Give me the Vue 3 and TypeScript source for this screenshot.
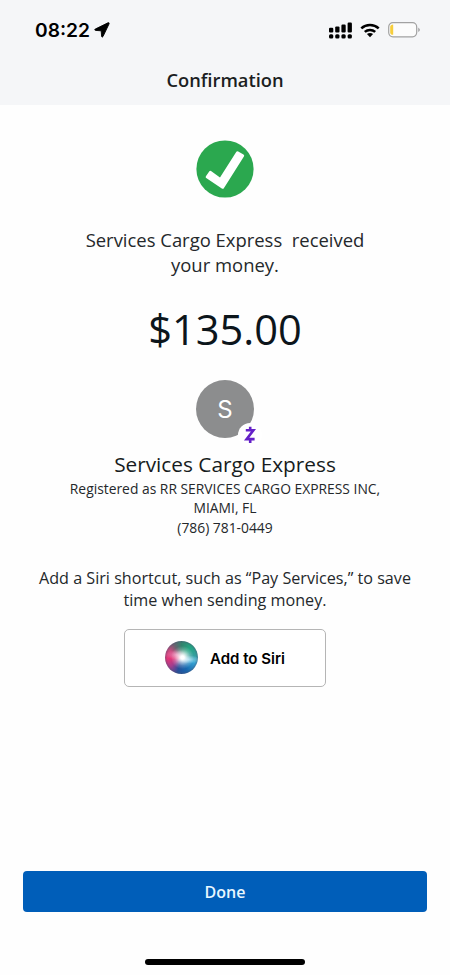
<script setup lang="ts">
const time = '08:22'
const recipient = 'Services Cargo Express'
const amount = '$135.00'
const details: string[] = ['Registered as RR SERVICES CARGO EXPRESS INC,', 'MIAMI, FL', '(786) 781-0449']
const bars: number[] = [4.8, 6.2, 8, 10]
</script>

<template>
  <main class="screen">
    <header class="top">
      <div class="status">
        <span class="time">{{ time }}</span>
        <svg class="arrow" width="16" height="16" viewBox="0 0 16 16">
          <path d="M1.2 7.1 14 .8q1.5-.4 1.1 1L9 14.5q-1 1.4-1.4-.2L7.2 8.8 1.6 8.4q-1.6-.3-.4-1.3Z" stroke="#000" stroke-width=".9" stroke-linejoin="round" />
        </svg>
        <svg class="signal" width="23" height="17" viewBox="0 0 23 17">
          <g v-for="(h, i) in bars" :key="i">
            <rect :x="i * 6.2" :y="10.6 - h" width="4.3" :height="h" rx="1.1" />
            <rect :x="i * 6.2" y="12.2" width="4.3" height="4.3" rx="1.5" />
          </g>
        </svg>
        <svg class="wifi" width="20" height="15" viewBox="0 0 20 15">
          <path d="M1.3 5.4a12.8 12.8 0 0 1 17.4 0M4.8 8.9a7.8 7.8 0 0 1 10.4 0" fill="none" stroke="#000" stroke-width="2.5" />
          <path d="m10 14.2-3.1-3.1q3.1-2.3 6.2 0Z" />
        </svg>
        <svg class="battery" width="33" height="16" viewBox="0 0 33 16">
          <rect x=".7" y=".7" width="28" height="14.1" rx="4.2" fill="#fcfcfc" stroke="#a2a2a2" stroke-width="1.2" />
          <path d="M5.2 2.6v10.2q-3-.2-3-2.4V5q0-2.2 3-2.4Z" fill="#f7ce3c" />
          <path d="M30.3 5.4q3 2.3 0 4.6Z" fill="#999" />
        </svg>
      </div>
      <h1 class="title">Confirmation</h1>
    </header>

    <svg class="check" width="58" height="58" viewBox="0 0 58 58">
      <circle cx="29" cy="29" r="28.6" fill="#2ba84f" />
      <path d="m9.9 36.3 3.3-4.9q.7-1 1.8-.3l9 6.3 16.2-25.4q.8-1.2 2-.5l5.3 3.1q1.2.8.4 2L28 48q-.9 1.4-2.2.5L10.2 38q-1-.8-.3-1.7Z" fill="#fff" />
    </svg>

    <p class="message">{{ recipient }}&nbsp; received<br />your money.</p>
    <p class="amount">{{ amount }}</p>

    <div class="avatar">
      <span class="initial">S</span>
      <svg class="badge" width="24" height="24" viewBox="0 0 24 24">
        <circle cx="12" cy="12" r="12" fill="#fff" />
        <path d="M7.8 7.2h7.6L8.6 16.1h8M12.2 3.7v3.5M12.2 16v4" fill="none" stroke="#6420c8" stroke-width="2.6" />
      </svg>
    </div>

    <h2 class="name">{{ recipient }}</h2>
    <div class="details">
      <p v-for="line in details" :key="line">{{ line }}</p>
    </div>

    <p class="hint">Add a Siri shortcut, such as “Pay Services,” to save<br />time when sending money.</p>

    <button class="siri" type="button">
      <span class="orb"></span>
      <span class="siri-label">Add to Siri</span>
    </button>

    <button class="done" type="button">Done</button>
    <div class="home"></div>
  </main>
</template>

<style>
body {
  margin: 0;
  background: #fff;
}
</style>

<style scoped>
.screen {
  box-sizing: border-box;
  width: 450px;
  height: 975px;
  display: flex;
  flex-direction: column;
  align-items: center;
  overflow: hidden;
  background: #fefefe;
  color: #24282b;
  font-family: 'Open Sans', sans-serif;
  text-align: center;
}
p, h1, h2 {
  margin: 0;
  font-weight: 400;
  white-space: nowrap;
}
.top {
  width: 100%;
  height: 104.5px;
  flex: none;
  background: #f5f6f8;
}
.status {
  display: flex;
  align-items: center;
  height: 60px;
  padding: 0 29.5px 0 35px;
  color: #000;
}
.time {
  width: 55px;
  font: 600 19.2px/24px Inter, sans-serif;
  text-align: left;
}
.arrow {
  margin-left: 4px;
}
.signal {
  margin-left: auto;
}
.wifi {
  margin-left: 8px;
}
.battery {
  margin-left: 8px;
}
.title {
  height: 40px;
  color: #1b1e22;
  font-size: 18.3px;
  font-weight: 600;
  line-height: 40px;
}
.check {
  flex: none;
  margin-top: 35.5px;
}
.message {
  margin-top: 29px;
  font-size: 18.45px;
  line-height: 25.2px;
}
.amount {
  margin-top: 22px;
  color: #0c151b;
  font-size: 41.6px;
  line-height: 60px;
}
.avatar {
  position: relative;
  flex: none;
  width: 58px;
  height: 58px;
  margin-top: 20.6px;
  border-radius: 50%;
  background: #8c8d8e;
  color: #fff;
}
.initial {
  display: block;
  font: 400 24px/60px Inter, sans-serif;
}
.badge {
  position: absolute;
  left: 42px;
  top: 43px;
}
.name {
  margin-top: 12px;
  color: #171c20;
  font-size: 20.8px;
  line-height: 28px;
}
.details {
  margin-top: 1px;
  font-size: 13.85px;
  line-height: 19.4px;
}
.hint {
  margin-top: 29.6px;
  font-size: 16.15px;
  line-height: 22.3px;
}
.siri {
  display: flex;
  align-items: center;
  justify-content: center;
  gap: 12px;
  flex: none;
  box-sizing: border-box;
  width: 202px;
  height: 58px;
  margin-top: 17.4px;
  padding: 0;
  border: 1.5px solid #b5b5b5;
  border-radius: 5px;
  background: #fff;
  color: #000;
  font: 600 15px/20px Inter, sans-serif;
}
.siri-label {
  padding-top: 2px;
}
.orb {
  width: 33px;
  height: 33px;
  border-radius: 50%;
  background:
    radial-gradient(circle at 53% 50%, #fff 0 7%, #ffffffb0 17%, #ffffff38 34%, transparent 48%),
    radial-gradient(ellipse 36% 12% at 72% 56%, #c9f0ff90, transparent 100%),
    radial-gradient(ellipse 34% 14% at 34% 42%, #f4a5cf90, transparent 100%),
    radial-gradient(circle at 50% 50%, transparent 60%, #4b507080 72%),
    conic-gradient(from 0deg at 50% 50%, #32826d, #22a581 40deg, #319f9d 80deg, #37a6d4 110deg, #1768b0 155deg, #244f99 195deg, #a43d8d 230deg, #e33577 265deg, #cc4a80 300deg, #68636f 330deg, #32826d);
}
.done {
  flex: none;
  width: 404px;
  height: 41.5px;
  margin-top: auto;
  padding: 0;
  border: 0;
  border-radius: 4px;
  background: #005eb9;
  color: #e8f7ff;
  font: 600 16px/42px 'Open Sans', sans-serif;
}
.home {
  flex: none;
  width: 160.5px;
  height: 6px;
  margin: 47px 0 9.8px;
  border-radius: 3px;
  background: #000;
}
</style>
